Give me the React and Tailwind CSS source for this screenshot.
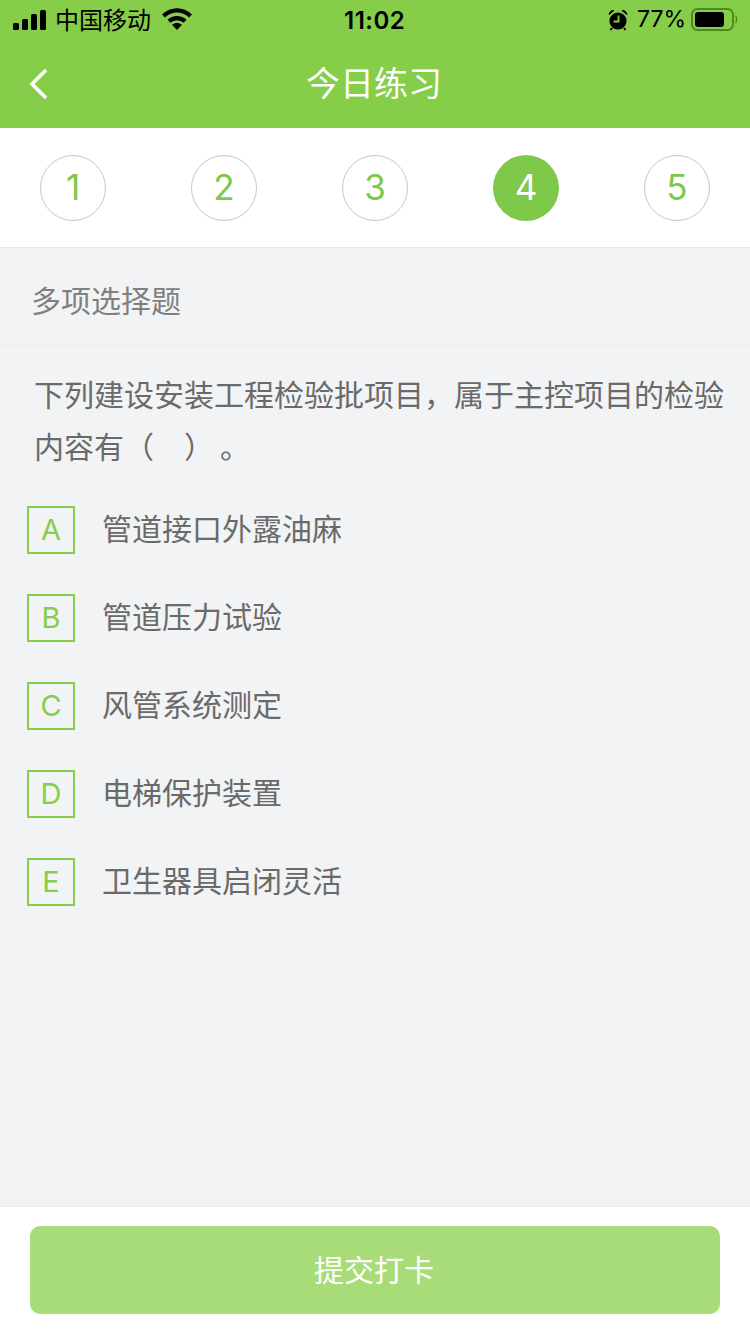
const CJK = { fontFamily: '"Noto Sans CJK SC", "Liberation Sans", sans-serif' };
const LAT = { fontFamily: 'Inter, "Noto Sans", sans-serif' };
const steps = [1, 2, 3, 4, 5];
const options = [
  ["A", "管道接口外露油麻"],
  ["B", "管道压力试验"],
  ["C", "风管系统测定"],
  ["D", "电梯保护装置"],
  ["E", "卫生器具启闭灵活"],
];

function Signal() {
  return (
    <svg width="34" height="20" viewBox="0 0 34 20" fill="#000">
      <rect x="0" y="13" width="6" height="7" rx="1.5" />
      <rect x="9" y="9" width="6" height="11" rx="1.5" />
      <rect x="18" y="4" width="6" height="16" rx="1.5" />
      <rect x="27" y="0" width="6" height="20" rx="1.5" />
    </svg>
  );
}

function Wifi() {
  return (
    <svg width="30" height="22" viewBox="0 0 30 22" fill="none" stroke="#000" strokeWidth="4.2">
      <path d="M1.5 8C9.5 0.5 20.5 0.5 28.5 8" />
      <path d="M7 13.2C11.5 9 18.5 9 23 13.2" />
      <path d="M15 22L10 16.8C13 14.4 17 14.4 20 16.8Z" fill="#000" stroke="none" />
    </svg>
  );
}

function Alarm() {
  return (
    <svg width="20" height="22" viewBox="0 0 20 22">
      <circle cx="10" cy="12" r="8.6" fill="#000" />
      <path d="M1 5.5C1.5 2.5 4 1 6 1.5ZM19 5.5C18.5 2.5 16 1 14 1.5Z" fill="#000" stroke="#000" />
      <path d="M10.5 6.5V12.5H5.5" fill="none" stroke="#86cd4a" strokeWidth="1.8" />
      <path d="M4 19L2.5 21M16 19L17.5 21" stroke="#000" strokeWidth="2" />
    </svg>
  );
}

function Battery() {
  return (
    <svg width="47" height="24" viewBox="0 0 47 24">
      <rect x="1" y="1" width="41" height="21" rx="5.5" fill="none" stroke="#4d8a22" strokeWidth="2" />
      <rect x="4" y="4" width="29" height="15" rx="3" fill="#000" />
      <path d="M44.5 8C46 9 46 14 44.5 15" fill="none" stroke="#4d8a22" strokeWidth="1.5" />
    </svg>
  );
}

export default function App() {
  return (
    <div className="w-[750px] h-[1334px] flex flex-col bg-[#f2f3f5] overflow-hidden" style={CJK}>
      <header className="h-[128px] bg-[#86cd4a] flex flex-col shrink-0">
        <div className="h-[40px] px-[13px] flex items-center justify-between relative">
          <div className="flex items-center">
            <Signal />
            <span className="ml-[8px] text-[24px] text-black leading-none mt-[-2px]">中国移动</span>
            <span className="ml-[11px] mt-[-2px]"><Wifi /></span>
          </div>
          <span className="absolute left-[344px] top-[8px] text-[24px] leading-[26px] font-semibold text-black tracking-[0.5px]" style={LAT}>11:02</span>
          <div className="flex items-center mr-[-1px]">
            <Alarm />
            <span className="ml-[9px] text-[23px] leading-none text-black mt-[-1px]" style={LAT}>77%</span>
            <span className="ml-[5px]"><Battery /></span>
          </div>
        </div>
        <div className="flex-1 flex items-center justify-center relative">
          <svg className="absolute left-[28px] top-[27px]" width="22" height="34" viewBox="0 0 22 34" fill="none" stroke="#fff" strokeWidth="3.6">
            <path d="M18 3L4 17L18 31" />
          </svg>
          <span className="text-[34px] leading-none text-white mt-[-4px] mr-[2px]">今日练习</span>
        </div>
      </header>

      <div className="h-[120px] bg-white border-b border-[#e8e8e8] px-[40px] flex items-center justify-between shrink-0">
        {steps.map((n) => (
          <div
            key={n}
            className={
              n === 4
                ? "w-[66px] h-[66px] rounded-full bg-[#7ec94a] flex items-center justify-center text-[35px] text-white"
                : "w-[66px] h-[66px] rounded-full border border-[#c8c8c8] flex items-center justify-center text-[35px] text-[#7ec94a]"
            }
            style={LAT}
          >
            <span className="font-normal">{n}</span>
          </div>
        ))}
      </div>

      <div className="h-[98px] border-b border-[#e9eaec] pl-[31px] flex items-center shrink-0">
        <span className="text-[30px] leading-none text-[#808080] mt-[4px]">多项选择题</span>
      </div>

      <p className="mt-[21px] pl-[34px] pr-[24px] text-[30px] leading-[52px] text-[#6a6a6a]">
        下列建设安装工程检验批项目，属于主控项目的检验内容有（　）&thinsp;。
      </p>

      <ul className="mt-[35px] flex flex-col gap-[40px] pl-[27px]">
        {options.map(([k, v]) => (
          <li key={k} className="flex items-center h-[48px]">
            <span className="w-[48px] h-[48px] border-2 border-[#86cd4a] flex items-center justify-center text-[29px] font-normal text-[#86cd4a]" style={LAT}>{k}</span>
            <span className="ml-[27px] text-[30px] leading-none text-[#6a6a6a] mt-[-6px]">{v}</span>
          </li>
        ))}
      </ul>

      <footer className="mt-auto h-[128px] bg-white border-t border-[#ececec] px-[30px] pt-[19px] shrink-0">
        <button className="w-full h-[88px] rounded-[10px] bg-[#a8dc78] text-[30px] text-white pb-[4px] pr-[2px]">提交打卡</button>
      </footer>
    </div>
  );
}
